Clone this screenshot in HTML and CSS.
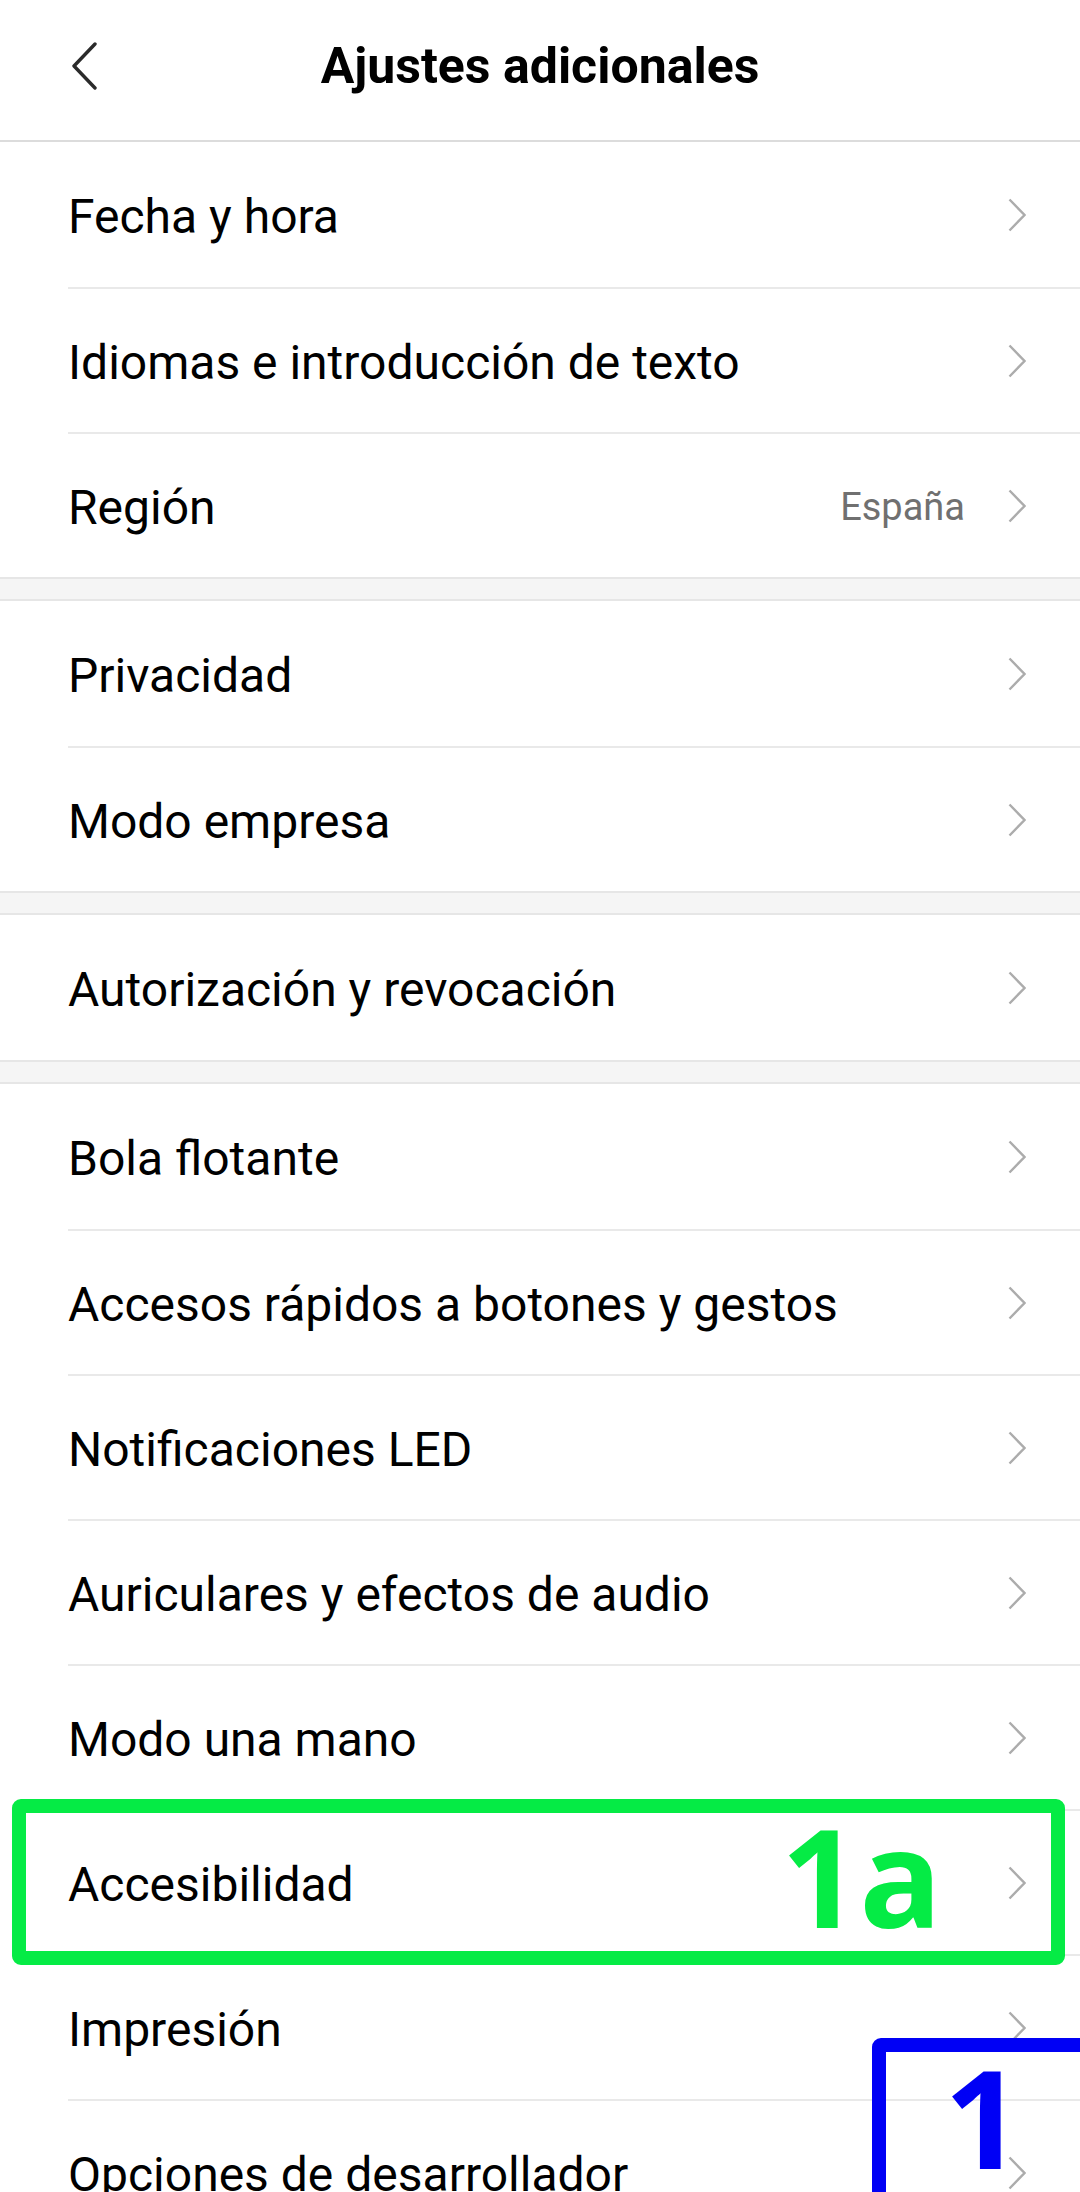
FILE: index.html
```html
<!DOCTYPE html>
<html lang="es">
<head>
    <meta charset="UTF-8">
    <meta name="viewport" content="width=device-width, initial-scale=1.0">
    <title>Ajustes adicionales</title>
    <link rel="stylesheet" href="styles.css">
</head>
<body>
    <div class="page">

        <!-- Top bar -->
        <div class="topbar">
            <svg class="back" width="26" height="48" viewBox="0 0 26 48">
                <polyline points="24,2 3,24 24,46" fill="none" stroke="#2b2b2b" stroke-width="3.4" stroke-linecap="round" stroke-linejoin="round"/>
            </svg>
            <h1>Ajustes adicionales</h1>
        </div>

        <div class="group">
            <div class="row"><span class="label">Fecha y hora</span><span class="chev"></span></div>
            <div class="row"><span class="label">Idiomas e introducción de texto</span><span class="chev"></span></div>
            <div class="row"><span class="label">Región</span><span class="value">España</span><span class="chev"></span></div>
        </div>
        <div class="gap"></div>

        <div class="group">
            <div class="row"><span class="label">Privacidad</span><span class="chev"></span></div>
            <div class="row"><span class="label">Modo empresa</span><span class="chev"></span></div>
        </div>
        <div class="gap"></div>

        <div class="group">
            <div class="row"><span class="label">Autorización y revocación</span><span class="chev"></span></div>
        </div>
        <div class="gap"></div>

        <div class="group">
            <div class="row"><span class="label">Bola flotante</span><span class="chev"></span></div>
            <div class="row"><span class="label">Accesos rápidos a botones y gestos</span><span class="chev"></span></div>
            <div class="row"><span class="label">Notificaciones LED</span><span class="chev"></span></div>
            <div class="row"><span class="label">Auriculares y efectos de audio</span><span class="chev"></span></div>
            <div class="row"><span class="label">Modo una mano</span><span class="chev"></span></div>
            <div class="row"><span class="label">Accesibilidad</span><span class="chev"></span></div>
            <div class="row"><span class="label">Impresión</span><span class="chev"></span></div>
            <div class="row"><span class="label">Opciones de desarrollador</span><span class="chev"></span></div>
        </div>

        <!-- Annotation boxes -->
        <div class="mark mark-green"><span class="mark-text">1a</span></div>
        <div class="mark mark-blue"><span class="mark-text">1</span></div>
    </div>
</body>
</html>
```

FILE: styles.css
```css
/* Base */
html, body {
    margin: 0;
    padding: 0;
    background: #fff;
}
body {
    width: 1080px;
    height: 2192px;
    overflow: hidden;
    font-family: Roboto, "Noto Sans", sans-serif;
    color: #000;
}
.page {
    position: relative;
    width: 1080px;
}
/* Top bar */
.topbar {
    height: 140px;
    display: flex;
    align-items: flex-start;
    justify-content: center;
    border-bottom: 2px solid #dcdcdc;
    position: relative;
}
.topbar h1 {
    margin: 0;
    margin-top: 35px;
    font-size: 50px;
    font-weight: 700;
    line-height: 62px;
}
.back {
    position: absolute;
    left: 71px;
    top: 42px;
}
/* List rows */
.group {
    background: #fff;
}
.row {
    height: 145px;
    box-sizing: border-box;
    margin-left: 68px;
    padding-right: 54px;
    display: flex;
    align-items: center;
    border-top: 2px solid #e9e9e9;
}
.row:first-child {
    border-top: none;
}
.label {
    flex: 1;
    font-size: 48px;
    line-height: 56px;
    padding-top: 4px;
}
.value {
    font-size: 38px;
    color: #707070;
    margin-right: 43px;
    padding-top: 2px;
}
.chev {
    width: 18px;
    height: 34px;
    background: no-repeat center / 18px 34px url("data:image/svg+xml;utf8,<svg xmlns='http://www.w3.org/2000/svg' width='18' height='34' viewBox='0 0 18 34'><polyline points='1.5,1.5 16.5,17 1.5,32.5' fill='none' stroke='%23acacac' stroke-width='2.4'/></svg>");
}
/* Section gap */
.gap {
    height: 20px;
    background: #f5f5f5;
    border-top: 2px solid #e6e6e6;
    border-bottom: 2px solid #e6e6e6;
}
/* Annotation overlays */
.mark {
    position: absolute;
    box-sizing: border-box;
    border-width: 14px;
    border-style: solid;
    border-radius: 9px;
}
.mark-green {
    left: 12px;
    top: 1799px;
    width: 1053px;
    height: 166px;
    border-color: #05eb45;
}
.mark-blue {
    left: 872px;
    top: 2038px;
    width: 260px;
    height: 220px;
    border-color: #0000f5;
}
.mark-text {
    position: absolute;
    font-family: "Open Sans", "Noto Sans", sans-serif;
    font-weight: 700;
    font-size: 137px;
    line-height: 137px;
}
.mark-green .mark-text {
    color: #05eb45;
    left: 755px;
    top: -6px;
}
.mark-blue .mark-text {
    color: #0000f5;
    left: 58px;
    top: -4px;
}
```
